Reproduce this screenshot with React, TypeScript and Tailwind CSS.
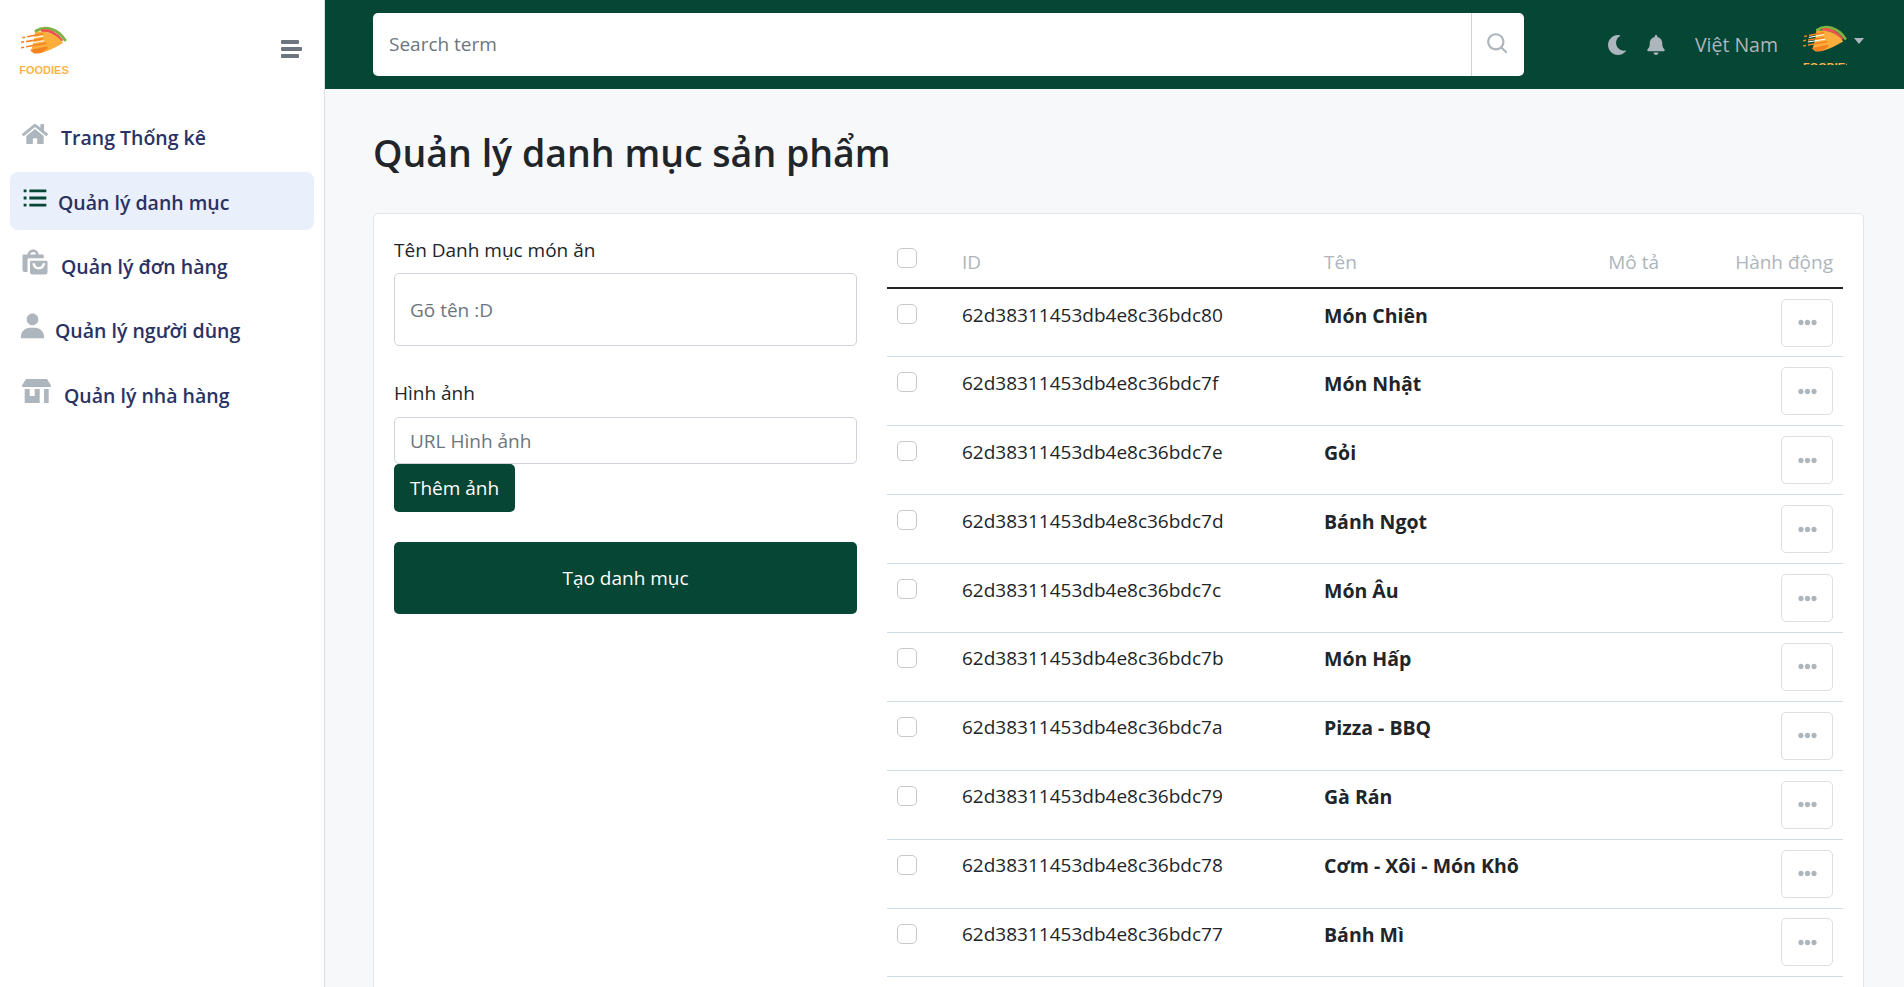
import { BiListUl, BiSearch, BiSolidShoppingBags, BiSolidUser } from "react-icons/bi"
import { FaBell, FaEllipsisH, FaHome, FaMoon } from "react-icons/fa"

const categories = [
  { id: "62d38311453db4e8c36bdc80", name: "Món Chiên" },
  { id: "62d38311453db4e8c36bdc7f", name: "Món Nhật" },
  { id: "62d38311453db4e8c36bdc7e", name: "Gỏi" },
  { id: "62d38311453db4e8c36bdc7d", name: "Bánh Ngọt" },
  { id: "62d38311453db4e8c36bdc7c", name: "Món Âu" },
  { id: "62d38311453db4e8c36bdc7b", name: "Món Hấp" },
  { id: "62d38311453db4e8c36bdc7a", name: "Pizza - BBQ" },
  { id: "62d38311453db4e8c36bdc79", name: "Gà Rán" },
  { id: "62d38311453db4e8c36bdc78", name: "Cơm - Xôi - Món Khô" },
  { id: "62d38311453db4e8c36bdc77", name: "Bánh Mì" },
  { id: "", name: "" }, // only the top of this row's button is on screen
]

const Taco = ({ className }: { className: string }) => (
  <svg viewBox="0 0 46 30" className={className}>
    <path d="M15 5 C24 -1 37 3 44 14" fill="none" stroke="#7cb342" strokeWidth="3" strokeLinecap="round" />
    <path d="M20 5 C28 3 36 8 41 15" fill="none" stroke="#ef5350" strokeWidth="3" />
    <path d="M14 6 C24 4 36 8 42 17 C35 21 28 25 20 27 C16 28 12 27 10 25 L13 14Z" fill="#fbae3c" />
    <g fill="#f58220">
      <path d="M1 11 L4 10.5 L4.3 12 L1.3 12.6Z" />
      <path d="M6 10 L22 7 L22.3 8.6 L6.3 11.6Z" />
      <path d="M0 15.6 L3 15 L3.3 16.6 L0.3 17.2Z" />
      <path d="M5 14.8 L22 12 L22.3 13.6 L5.3 16.4Z" />
      <path d="M0 21 L3 20.4 L3.3 22 L0.3 22.6Z" />
      <path d="M5 20 L25 16.5 L25.3 18.1 L5.3 21.6Z" />
      <path d="M9 24 L26 20.5 L27 22 L20 27 L13 27.5Z" />
    </g>
    <g fill="#fff">
      <path d="M6 12.4 L22 9.3 L22.3 10.4 L6.2 13.5Z" />
      <path d="M5 17.2 L23 14.2 L23.3 15.2 L5.2 18.2Z" />
    </g>
  </svg>
)

const MenuIcon = () => (
  <svg viewBox="0 0 21 18" className="h-[18px] w-[21px] fill-[#6c757d]">
    <rect x="0" y="0" width="18" height="4" rx="1" />
    <rect x="0" y="7" width="21" height="4" rx="1" />
    <rect x="0" y="14" width="18" height="4" rx="1" />
  </svg>
)

const StoreIcon = ({ className }: { className: string }) => (
  <svg viewBox="0 0 29 24" fill="currentColor" className={className}>
    <path d="M4 0 H25 L29 6.5 A1 1 0 0 1 28 8 H1 A1 1 0 0 1 0 6.5Z" />
    <path d="M2.7 10 H7.7 V17 H12.7 V10 H17.7 V23 A0.7 0.7 0 0 1 17 24 H3.4 A0.7 0.7 0 0 1 2.7 23Z" />
    <path d="M22 10 H26.7 V24 H22Z" />
  </svg>
)

const navItems = [
  { label: "Trang Thống kê", Icon: FaHome, iconSize: "h-[26px] w-[26px]", gap: "ml-[13px]", active: false },
  { label: "Quản lý danh mục", Icon: BiListUl, iconSize: "h-[34px] w-[34px] -ml-[4px]", gap: "ml-[6px]", active: true },
  { label: "Quản lý đơn hàng", Icon: BiSolidShoppingBags, iconSize: "h-[30px] w-[30px] -ml-[2px]", gap: "ml-[11px]", active: false },
  { label: "Quản lý người dùng", Icon: BiSolidUser, iconSize: "h-[31px] w-[31px] -ml-[5px]", gap: "ml-[7px]", active: false },
  { label: "Quản lý nhà hàng", Icon: StoreIcon, iconSize: "h-[24px] w-[29px]", gap: "ml-[13px]", active: false },
]

const Sidebar = () => (
  <aside className="flex w-[325px] shrink-0 flex-col border-r border-[#dcdfe3] bg-white">
    <div className="flex h-[89px] items-center justify-between pl-[20px] pr-[22px]">
      <div className="mt-[14px] flex w-[48px] flex-col items-center">
        <Taco className="h-[30px] w-[46px]" />
        <span className="mt-[7px] text-[11px] leading-[14px] font-bold text-[#fdb44b] font-['Liberation_Sans',sans-serif]">FOODIES</span>
      </div>
      <div className="mt-[8px] flex"><MenuIcon /></div>
    </div>
    <nav className="mt-[19px] flex flex-col gap-[6.3px] px-[10px]">
      {navItems.map(({ label, Icon, iconSize, gap, active }) => (
        <a
          key={label}
          className={`flex h-[58px] items-center rounded-[8px] pl-[12px] text-[19.5px] font-semibold text-[#2a3264] ${active ? "bg-[#e9effb]" : ""}`}
        >
          <Icon className={`-mt-[7px] shrink-0 ${iconSize} ${active ? "text-[#064635]" : "text-[#adb5bd]"}`} />
          <span className={`pt-[2px] ${gap}`}>{label}</span>
        </a>
      ))}
    </nav>
  </aside>
)

const Header = () => (
  <header className="flex h-[89px] items-center bg-[#064635] pl-[48px] pr-[40px]">
    <div className="-mt-[1px] flex h-[63px] w-[1151px] overflow-hidden rounded-[5px] bg-white">
      <input placeholder="Search term" className="min-w-0 flex-1 px-[16px] text-[19px] text-[#212529] outline-none placeholder:text-[#6c757d]" />
      <div className="flex w-[53px] items-center justify-center border-l border-[#ced4da]">
        <BiSearch className="h-[26px] w-[26px] text-[#adb5bd]" />
      </div>
    </div>
    <div className="ml-auto flex items-center text-[#adb5bd]">
      <FaMoon className="h-[20px] w-[20px]" />
      <FaBell className="ml-[20px] h-[20px] w-[18px]" />
      <span className="ml-[30px] text-[19.5px]">Việt Nam</span>
      <div className="ml-[25px] h-[40px] w-[44px] overflow-hidden">
        <Taco className="h-[29px] w-[44px]" />
        <span className="mt-[6px] block text-center text-[11px] leading-[14px] font-bold text-[#fdb44b] font-['Liberation_Sans',sans-serif]">FOODIES</span>
      </div>
      <span className="ml-[7px] -mt-[8px] h-0 w-0 border-x-[5.5px] border-t-[6px] border-x-transparent border-t-[#adb5bd]" />
    </div>
  </header>
)

const Checkbox = () => (
  <input type="checkbox" className="h-[20px] w-[20px] appearance-none rounded-[5px] border border-[#c4c8cc] bg-white" />
)

const CategoryForm = () => (
  <form className="w-[463px] shrink-0 pt-[22px] text-[19px]">
    <label className="block leading-[28px] text-[#212529]">Tên Danh mục món ăn</label>
    <input placeholder="Gõ tên :D" className="mt-[9px] block h-[73px] w-full rounded-[5px] border border-[#ced4da] px-[15px] outline-none placeholder:text-[#6c757d]" />
    <label className="mt-[33px] block leading-[28px] text-[#212529]">Hình ảnh</label>
    <input placeholder="URL Hình ảnh" className="mt-[10px] block h-[47px] w-full rounded-[5px] border border-[#ced4da] px-[15px] outline-none placeholder:text-[#6c757d]" />
    <button type="button" className="block h-[48px] rounded-[5px] bg-[#064635] px-[16px] text-white">Thêm ảnh</button>
    <button type="button" className="mt-[30px] block h-[72px] w-full rounded-[5px] bg-[#064635] text-white">Tạo danh mục</button>
  </form>
)

const CategoryTable = () => (
  <table className="ml-[30px] w-[956px] table-fixed border-collapse self-start text-[19px] text-[#212529]">
    <thead>
      <tr className="h-[74px] border-b-2 border-[#212529] text-[#adb5bd]">
        <th className="w-[62px] pl-[10px] pt-[33px] text-left align-top"><Checkbox /></th>
        <th className="w-[375px] pl-[13px] pt-[24px] text-left font-normal">ID</th>
        <th className="w-[200px] pt-[24px] text-left font-normal">Tên</th>
        <th className="w-[135px] pt-[24px] text-right font-normal">Mô tả</th>
        <th className="pr-[10px] pt-[24px] text-right font-normal">Hành động</th>
      </tr>
    </thead>
    <tbody>
      {categories.map((category, i) => (
        <tr key={i} className="h-[68.9px] border-b border-[#cfdde9]">
          <td className="pl-[10px] pt-[14px] align-top"><Checkbox /></td>
          <td className="pl-[13px] pt-[11.5px] align-top">{category.id}</td>
          <td className="pt-[11.5px] align-top text-[19.5px] font-bold">{category.name}</td>
          <td />
          <td className="pr-[10px] align-middle">
            <button type="button" className="ml-auto flex h-[48px] w-[52px] items-center justify-center rounded-[5px] border border-[#dcdfe3] text-[#adb5bd]">
              <FaEllipsisH className="text-[19px]" />
            </button>
          </td>
        </tr>
      ))}
    </tbody>
  </table>
)

export default function App() {
  return (
    <div className="flex h-[987px] overflow-hidden bg-[#f7f8fa] font-['Open_Sans',sans-serif]">
      <Sidebar />
      <div className="flex min-w-0 flex-1 flex-col">
        <Header />
        <main className="flex min-h-0 flex-1 flex-col pl-[48px] pr-[40px]">
          <h1 className="mt-[40px] text-[37.5px] leading-[48px] font-semibold text-[#212529]">Quản lý danh mục sản phẩm</h1>
          <section className="mt-[36px] flex flex-1 rounded-t-[5px] border border-[#e3e5e8] bg-white pl-[20px] pr-[20px]">
            <CategoryForm />
            <CategoryTable />
          </section>
        </main>
      </div>
    </div>
  )
}
